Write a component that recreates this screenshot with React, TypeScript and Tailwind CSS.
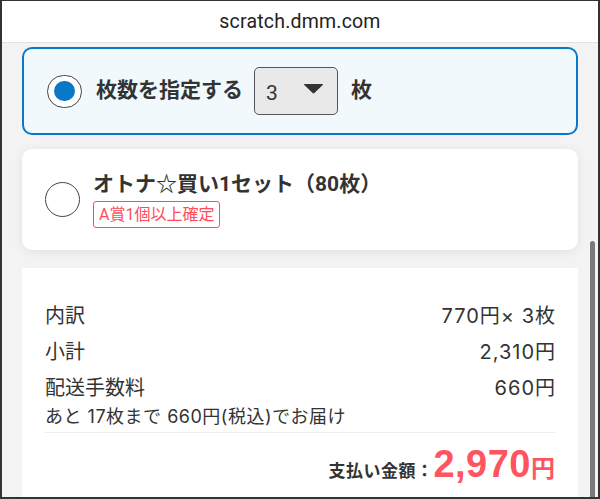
import React from 'react'

const JP = "font-['Roboto','Noto_Sans_CJK_JP',sans-serif]"
const NUM = "font-['Inter','Noto_Sans_CJK_JP',sans-serif]"

function Row({ label, value }: { label: string; value: string }) {
  return (
    <div className="flex items-center justify-between h-[36px] text-[20px] text-[#333]">
      <span>{label}</span>
      <span className={`${NUM} tracking-[1px] -mr-[1px]`}>{value}</span>
    </div>
  )
}

export default function App() {
  return (
    <div className={`w-[600px] h-[499px] border-2 border-t border-[#333] overflow-hidden flex flex-col ${JP}`}>
      {/* address bar */}
      <div className="h-[42px] shrink-0 bg-white border-b border-[#e2e2e2] flex items-center justify-center">
        <span className="text-[19.5px] text-[#222] tracking-[0.2px]">scratch.dmm.com</span>
      </div>

      <div className="relative flex-1 bg-[#f3f3f3] px-[20px] pt-[4px] flex flex-col">
        {/* option: specify count */}
        <div className="h-[88px] shrink-0 rounded-[10px] border-2 border-[#0a78c8] bg-[#f2f9fc] flex items-center pl-[23px]">
          <span className="w-[35px] h-[33px] rounded-full border border-[#444] bg-white flex items-center justify-center">
            <span className="w-[21px] h-[20px] rounded-full bg-[#0a78c8]" />
          </span>
          <span className="ml-[14px] text-[21px] font-bold text-[#333]">枚数を指定する</span>
          <div className="ml-[11px] w-[84px] h-[48px] rounded-[5px] border border-[#555] bg-[#e9e9e9] flex items-center justify-between pl-[11px] pr-[13px]">
            <span className="text-[21px] text-[#333] mt-[6px]">3</span>
            <svg width="21" height="11" viewBox="0 0 21 11" className="mt-[-6px]">
              <path d="M1.5 1 H19.5 Q20.5 1 19.7 2 L11.4 10 Q10.5 10.8 9.6 10 L1.3 2 Q0.5 1 1.5 1 Z" fill="#333" />
            </svg>
          </div>
          <span className="ml-[13px] text-[21px] font-bold text-[#333]">枚</span>
        </div>

        {/* option: set */}
        <div className="mt-[14px] h-[101px] shrink-0 rounded-[10px] bg-white shadow-[0_2px_10px_rgba(0,0,0,0.08)] flex items-center pl-[23px]">
          <span className="w-[35px] h-[35px] rounded-full border-[1.5px] border-[#444] bg-white" />
          <div className="ml-[13px] flex flex-col items-start">
            <span className="text-[21px] font-bold text-[#333] leading-[26px]">オトナ☆買い1セット（80枚）</span>
            <span className="mt-[4px] h-[27px] px-[5px] rounded-[3px] border border-[#ff4c5a] text-[16px] text-[#ff4c5a] flex items-center">
              A賞1個以上確定
            </span>
          </div>
        </div>

        {/* summary */}
        <div className="mt-[18px] flex-1 bg-white px-[23px] pt-[30px]">
          <Row label="内訳" value="770円× 3枚" />
          <Row label="小計" value="2,310円" />
          <Row label="配送手数料" value="660円" />
          <div className={`text-[18px] text-[#333] leading-[22px] tracking-[0.5px] ${NUM}`}>あと 17枚まで 660円(税込)でお届け</div>
          <div className="mt-[4px] border-t border-[#ececec]" />
          <div className="flex items-baseline justify-end mt-[10px]">
            <span className="text-[17px] font-bold text-[#333] tracking-[0.5px]">支払い金額：</span>
            <span className="font-['Liberation_Sans',sans-serif] text-[38px] font-bold text-[#ff5560] leading-[42px] tracking-[0.5px]">2,970</span>
            <span className="text-[24px] font-bold text-[#ff5560]">円</span>
          </div>
        </div>

        {/* scrollbar */}
        <div className="absolute right-[3px] top-[198px] bottom-0 w-[5px] rounded-t-full bg-[#7a7a7a]" />
      </div>
    </div>
  )
}
